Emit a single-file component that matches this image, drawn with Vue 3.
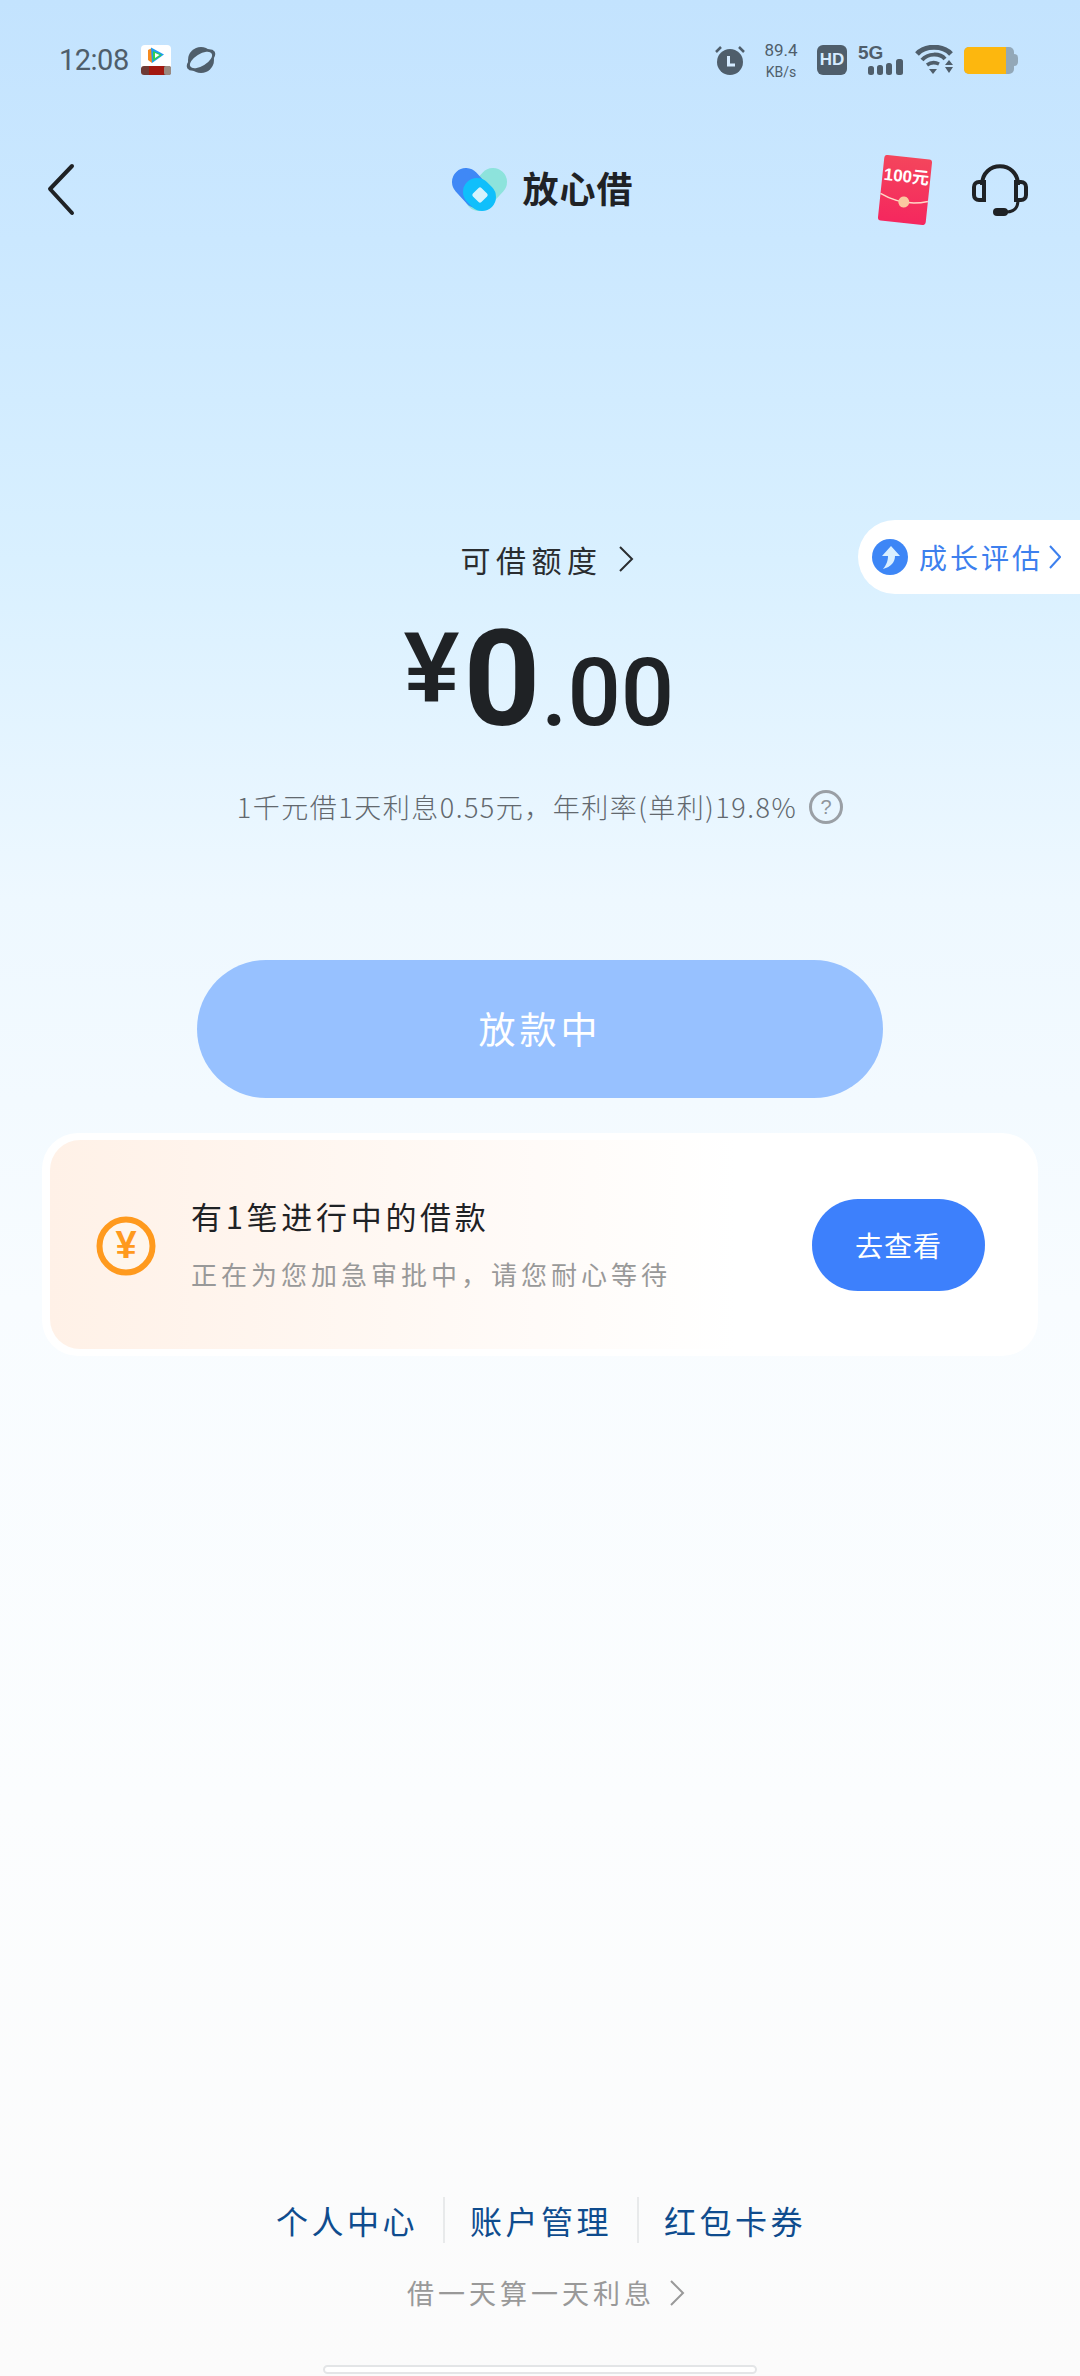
<script setup>
const links = ['个人中心', '账户管理', '红包卡券']
</script>

<template>
  <div class="page">
    <!-- 状态栏 -->
    <div class="status">
      <div class="status-left">
        <span class="time">12:08</span>
        <svg class="app-icon" width="30" height="30" viewBox="0 0 30 30">
          <rect width="30" height="30" rx="4" fill="#fff" />
          <path d="M7 5 L11 3 L11 18 L7 15 Z" fill="#f58a1f" />
          <path d="M10 2.500 L23 9.500 L11 18 Z" fill="#1d9cf0" />
          <path d="M12 6 L21 10 L12 16 Z" fill="#2fd04f" />
          <path d="M14 8 L18.500 10 L14 13 Z" fill="#fff" />
          <rect y="21" width="30" height="9" rx="3" fill="#6e3a34" />
          <rect x="8" y="21" width="15" height="9" fill="#a3180f" />
          <rect x="23" y="21" width="7" height="9" rx="2" fill="#9a8a80" />
        </svg>
        <svg width="30" height="28" viewBox="0 0 30 28">
          <ellipse cx="15" cy="14" rx="16" ry="8" fill="#4f5e6b" transform="rotate(-32 15 14)" />
          <circle cx="15" cy="14" r="13" fill="#4f5e6b" />
          <ellipse cx="15" cy="14" rx="12.500" ry="6" fill="#c4e4fe" transform="rotate(-32 15 14)" />
        </svg>
      </div>
      <div class="status-right">
        <svg width="30" height="30" viewBox="0 0 30 30">
          <circle cx="15" cy="17" r="13" fill="#4f5e6b" />
          <path d="M1 7 L6 2 M29 7 L24 2" stroke="#4f5e6b" stroke-width="2.500" />
          <path d="M13.500 11 V20 H20" fill="none" stroke="#d5ebff" stroke-width="3" />
        </svg>
        <div class="speed">
          <span class="speed-num">89.4</span>
          <span class="speed-unit">KB/s</span>
        </div>
        <span class="hd">HD</span>
        <div class="signal">
          <span class="five-g">5G</span>
          <svg class="bars" width="35" height="16" viewBox="0 0 35 16">
            <rect x="0" y="7" width="6" height="9" rx="2.500" fill="#4f5e6b" />
            <rect x="9" y="6" width="6" height="10" rx="2.500" fill="#4f5e6b" />
            <rect x="18" y="4" width="6" height="12" rx="2.500" fill="#4f5e6b" />
            <rect x="28" y="0" width="7" height="16" rx="2.500" fill="#4f5e6b" />
          </svg>
        </div>
        <svg width="38" height="30" viewBox="0 0 38 30">
          <path d="M2 9 C10 0 28 0 36 9" fill="none" stroke="#4f5e6b" stroke-width="5" />
          <path d="M7 15 C13 8 25 8 30 14" fill="none" stroke="#4f5e6b" stroke-width="4" />
          <path d="M12 20 C16 17 20 17 24 19" fill="none" stroke="#4f5e6b" stroke-width="3.500" />
          <path d="M14 24 H22 L18 29 Z" fill="#4f5e6b" />
          <path d="M34 15 L38 20 H30 Z M30 22 H38 L34 28 Z" fill="#4f5e6b" />
        </svg>
        <div class="battery">
          <div class="battery-body">
            <div class="battery-fill"></div>
          </div>
          <div class="battery-nub"></div>
        </div>
      </div>
    </div>

    <!-- 导航 -->
    <div class="nav">
      <svg class="back" width="28" height="54" viewBox="0 0 28 54">
        <path d="M25 3 L3 26 L25 50" fill="none" stroke="#1f2225" stroke-width="4" stroke-linecap="round" stroke-linejoin="round" />
      </svg>
      <div class="brand">
        <svg width="56" height="44" viewBox="0 0 56 44">
          <path d="M41 14 L27 29" stroke="#8de3dc" stroke-width="28" stroke-linecap="round" />
          <path d="M14 14 L25 26" stroke="#3f88f6" stroke-width="28" stroke-linecap="round" />
          <path d="M25 24 L30 29" stroke="#10bffb" stroke-width="28" stroke-linecap="round" />
          <rect x="22" y="21" width="12" height="12" rx="2" fill="#d5f3fd" transform="rotate(45 28 27)" />
        </svg>
        <span class="brand-name">放心借</span>
      </div>
      <div class="nav-actions">
        <svg width="56" height="70" viewBox="0 0 56 70">
          <defs>
            <linearGradient id="packetBg" x1="0" y1="0" x2="0" y2="1">
              <stop offset="0" stop-color="#f4455c" />
              <stop offset="1" stop-color="#f5275e" />
            </linearGradient>
          </defs>
          <g transform="rotate(6 28 35)">
            <rect x="4" y="2" width="48" height="66" rx="3" fill="url(#packetBg)" />
            <text x="28" y="27" class="packet-text">100元</text>
            <path d="M4 41 Q28 52 52 44" fill="none" stroke="#ffd7c7" stroke-width="1.500" />
            <circle cx="28" cy="47" r="5.500" fill="#fbc9a0" />
          </g>
        </svg>
        <svg width="56" height="54" viewBox="0 0 56 54">
          <path d="M10 22 C10 -3 46 -3 46 22" fill="none" stroke="#1f2225" stroke-width="4" />
          <path d="M10 19 H7 C4 19 2 21 2 24 V32 C2 35 4 37 7 37 H12 V19 Z" fill="none" stroke="#1f2225" stroke-width="4" />
          <path d="M46 19 H49 C52 19 54 21 54 24 V32 C54 35 52 37 49 37 H44 V19 Z" fill="none" stroke="#1f2225" stroke-width="4" />
          <path d="M46 37 C46 45 42 49 34 49" fill="none" stroke="#1f2225" stroke-width="3" />
          <rect x="21" y="45" width="15" height="8" rx="4" fill="#1f2225" />
        </svg>
      </div>
    </div>

    <!-- 额度 -->
    <div class="hero">
      <div class="limit-label">
        可借额度
        <svg width="16" height="28" viewBox="0 0 16 28">
          <path d="M2 2 L14 14 L2 26" fill="none" stroke="#2a2d30" stroke-width="2" />
        </svg>
      </div>
      <div class="amount"><span class="yen">¥</span><span class="int">0</span><span class="dec">.00</span></div>
      <div class="rate">
        1千元借1天利息0.55元，年利率(单利)19.8%
        <span class="help">?</span>
      </div>
    </div>

    <button class="loan-btn">放款中</button>

    <div class="card">
      <div class="card-inner">
        <svg class="coin" width="60" height="62" viewBox="0 0 60 62">
          <circle cx="30" cy="31" r="26.500" fill="#fff6ec" stroke="#ff9a1e" stroke-width="6" />
          <text x="30" y="43" class="coin-text">¥</text>
        </svg>
        <div class="card-text">
          <div class="card-title">有1笔进行中的借款</div>
          <div class="card-sub">正在为您加急审批中，请您耐心等待</div>
        </div>
        <button class="check-btn">去查看</button>
      </div>
    </div>

    <div class="footer">
      <div class="links">
        <span v-for="item in links" :key="item" class="link">{{ item }}</span>
      </div>
      <div class="slogan">
        借一天算一天利息
        <svg width="16" height="28" viewBox="0 0 16 28">
          <path d="M2 2 L14 14 L2 26" fill="none" stroke="#999" stroke-width="2" />
        </svg>
      </div>
      <div class="home-bar"></div>
    </div>

    <!-- 成长评估 -->
    <div class="growth">
      <svg width="36" height="36" viewBox="0 0 36 36">
        <circle cx="18" cy="18" r="18" fill="#3d86f6" />
        <path d="M19 7 L28 17 H23 C23 23 19 28 11 30 C15 25 16 21 16 17 H10 Z" fill="#d9efff" />
      </svg>
      <span>成长评估</span>
      <svg class="growth-arrow" width="12" height="24" viewBox="0 0 12 24">
        <path d="M1 1 L11 12 L1 23" fill="none" stroke="#3d80ee" stroke-width="2" />
      </svg>
    </div>
  </div>
</template>

<style scoped>
.page {
  position: relative;
  width: 1080px;
  height: 2376px;
  overflow: hidden;
  display: flex;
  flex-direction: column;
  background: linear-gradient(180deg, #c3e3fe 0, #cbe8ff 240px, #d9f0ff 560px, #eef8ff 900px, #f8fcff 1300px, #fbfdfe 1800px, #fbfbfb 2376px);
  font-family: "Noto Sans CJK SC", "Noto Sans", sans-serif;
}

.status {
  height: 120px;
  flex: none;
  display: flex;
  justify-content: space-between;
  align-items: center;
  padding: 0 62px 0 59px;
}
.status-left,
.status-right {
  display: flex;
  align-items: center;
}
.time {
  width: 67px;
  margin-right: 15px;
  font-family: Roboto, sans-serif;
  font-size: 29px;
  letter-spacing: -0.500px;
  color: #4f5e6b;
}
.app-icon {
  margin-right: 15px;
}
.speed {
  display: flex;
  flex-direction: column;
  align-items: center;
  width: 34px;
  margin: 0 19px;
  font-family: Roboto, sans-serif;
  color: #4f5e6b;
}
.speed-num {
  font-size: 17px;
  line-height: 23px;
}
.speed-unit {
  font-size: 14px;
  line-height: 20px;
}
.hd {
  width: 30px;
  height: 30px;
  border-radius: 6px;
  background: #4f5e6b;
  color: #d5ebff;
  font: 700 17px/30px "Liberation Sans", sans-serif;
  text-align: center;
  margin-right: 11px;
}
.signal {
  display: flex;
  flex-direction: column;
  width: 45px;
  height: 30px;
  margin-right: 12px;
}
.five-g {
  height: 14px;
  font: 700 19px/16px "Liberation Sans", sans-serif;
  color: #4f5e6b;
}
.bars {
  display: block;
  margin-left: 10px;
}
.battery {
  display: flex;
  align-items: center;
  margin-left: 11px;
}
.battery-body {
  width: 50px;
  height: 27px;
  border-radius: 5px;
  background: #93a8b8;
  overflow: hidden;
}
.battery-fill {
  width: 42px;
  height: 100%;
  background: #fdb70e;
}
.battery-nub {
  width: 4px;
  height: 12px;
  border-radius: 0 4px 4px 0;
  background: #93a8b8;
}

.nav {
  margin-top: 30px;
  height: 80px;
  flex: none;
  display: grid;
  grid-template-columns: 1fr auto 1fr;
  align-items: center;
  padding: 0 52px 0 47px;
}
.back {
  display: block;
}
.brand {
  display: flex;
  align-items: center;
  gap: 14px;
  margin-left: 11px;
}
.brand-name {
  margin-bottom: 6px;
  font-size: 36px;
  font-weight: 700;
  line-height: 44px;
  letter-spacing: 1px;
  color: #1f2225;
}
.nav-actions {
  display: flex;
  justify-content: flex-end;
  align-items: center;
  gap: 39px;
}
.packet-text {
  font: 700 17px "Liberation Sans", "Noto Sans CJK SC", sans-serif;
  fill: #fff;
  text-anchor: middle;
}

.hero {
  margin-top: 309px;
  display: flex;
  flex-direction: column;
  align-items: center;
  flex: none;
}
.limit-label {
  display: flex;
  align-items: center;
  gap: 15px;
  height: 40px;
  margin-left: 14px;
  font-size: 30px;
  line-height: 40px;
  letter-spacing: 5.500px;
  color: #2a2d30;
}
.amount {
  height: 140px;
  margin-top: 18px;
  margin-right: 2px;
  line-height: 140px;
  font-family: Roboto, sans-serif;
  font-weight: 700;
  color: #1f2225;
  white-space: nowrap;
}
.yen {
  font-family: "Liberation Sans", sans-serif;
  font-size: 100px;
  vertical-align: 23px;
}
.int {
  font-size: 134px;
  margin-left: 4px;
}
.dec {
  font-size: 94px;
  font-weight: 500;
  margin-left: 1px;
}
.rate {
  display: flex;
  align-items: center;
  gap: 12px;
  margin-top: 50px;
  height: 40px;
  font-size: 27px;
  line-height: 40px;
  letter-spacing: 1.500px;
  color: #62686e;
  font-weight: 300;
  white-space: nowrap;
}
.help {
  width: 34px;
  height: 34px;
  box-sizing: border-box;
  border: 3px solid #9a9fa5;
  border-radius: 50%;
  color: #8f959b;
  font: 400 20px/28px "Liberation Sans", sans-serif;
  text-align: center;
  letter-spacing: 0;
}

.loan-btn {
  display: block;
  flex: none;
  width: 686px;
  height: 138px;
  margin: 133px 0 0 197px;
  padding: 0 0 2px;
  border: 0;
  border-radius: 69px;
  background: #97c1ff;
  color: #fff;
  font-family: inherit;
  font-size: 37px;
  letter-spacing: 4px;
}

.card {
  flex: none;
  height: 223px;
  margin: 35px 42px 0;
  padding: 7px 8px;
  box-sizing: border-box;
  background: #fff;
  border-radius: 36px;
}
.card-inner {
  height: 100%;
  box-sizing: border-box;
  padding: 0 45px 0 46px;
  display: flex;
  align-items: center;
  border-radius: 30px;
  background: linear-gradient(90deg, #fff1e7 0, #fff8f3 35%, #fff 70%);
}
.coin {
  flex: none;
  margin-top: 3px;
}
.coin-text {
  font: 700 38px "Liberation Sans", sans-serif;
  fill: #ff9a1e;
  text-anchor: middle;
}
.card-text {
  flex: 1;
  margin-left: 35px;
  margin-top: -2px;
}
.card-title {
  font-size: 31px;
  line-height: 40px;
  letter-spacing: 3.700px;
  color: #1f2225;
}
.card-sub {
  margin-top: 20px;
  font-size: 26px;
  line-height: 36px;
  letter-spacing: 4px;
  color: #999;
  white-space: nowrap;
}
.check-btn {
  flex: none;
  width: 173px;
  height: 92px;
  padding: 0;
  border: 0;
  border-radius: 46px;
  background: #3d80fc;
  color: #fff;
  font-family: inherit;
  font-size: 28px;
  letter-spacing: 1px;
}

.footer {
  margin-top: auto;
  display: flex;
  flex-direction: column;
  align-items: center;
  padding-bottom: 2px;
}
.links {
  display: flex;
  height: 46px;
  margin-left: 2px;
}
.link {
  padding: 0 25px;
  font-size: 32px;
  line-height: 46px;
  letter-spacing: 3.500px;
  color: #0f4c8e;
  border-left: 2px solid #e8eaeb;
}
.link:first-child {
  border-left: 0;
}
.slogan {
  display: flex;
  align-items: center;
  gap: 14px;
  height: 40px;
  margin-top: 30px;
  margin-left: 12px;
  font-size: 27px;
  line-height: 40px;
  letter-spacing: 4px;
  color: #999;
}
.home-bar {
  width: 434px;
  height: 9px;
  margin-top: 52px;
  box-sizing: border-box;
  border: 2px solid #e3e5e7;
  border-radius: 5px;
  background: #fff;
}

/* 悬浮入口 */
.growth {
  position: absolute;
  top: 520px;
  right: 0;
  width: 222px;
  height: 74px;
  box-sizing: border-box;
  padding-left: 14px;
  display: flex;
  align-items: center;
  gap: 11px;
  border-radius: 37px 0 0 37px;
  background: #fff;
  color: #3d80ee;
  font-size: 28px;
  letter-spacing: 3px;
  white-space: nowrap;
}
.growth-arrow {
  margin-left: -5px;
}
</style>
